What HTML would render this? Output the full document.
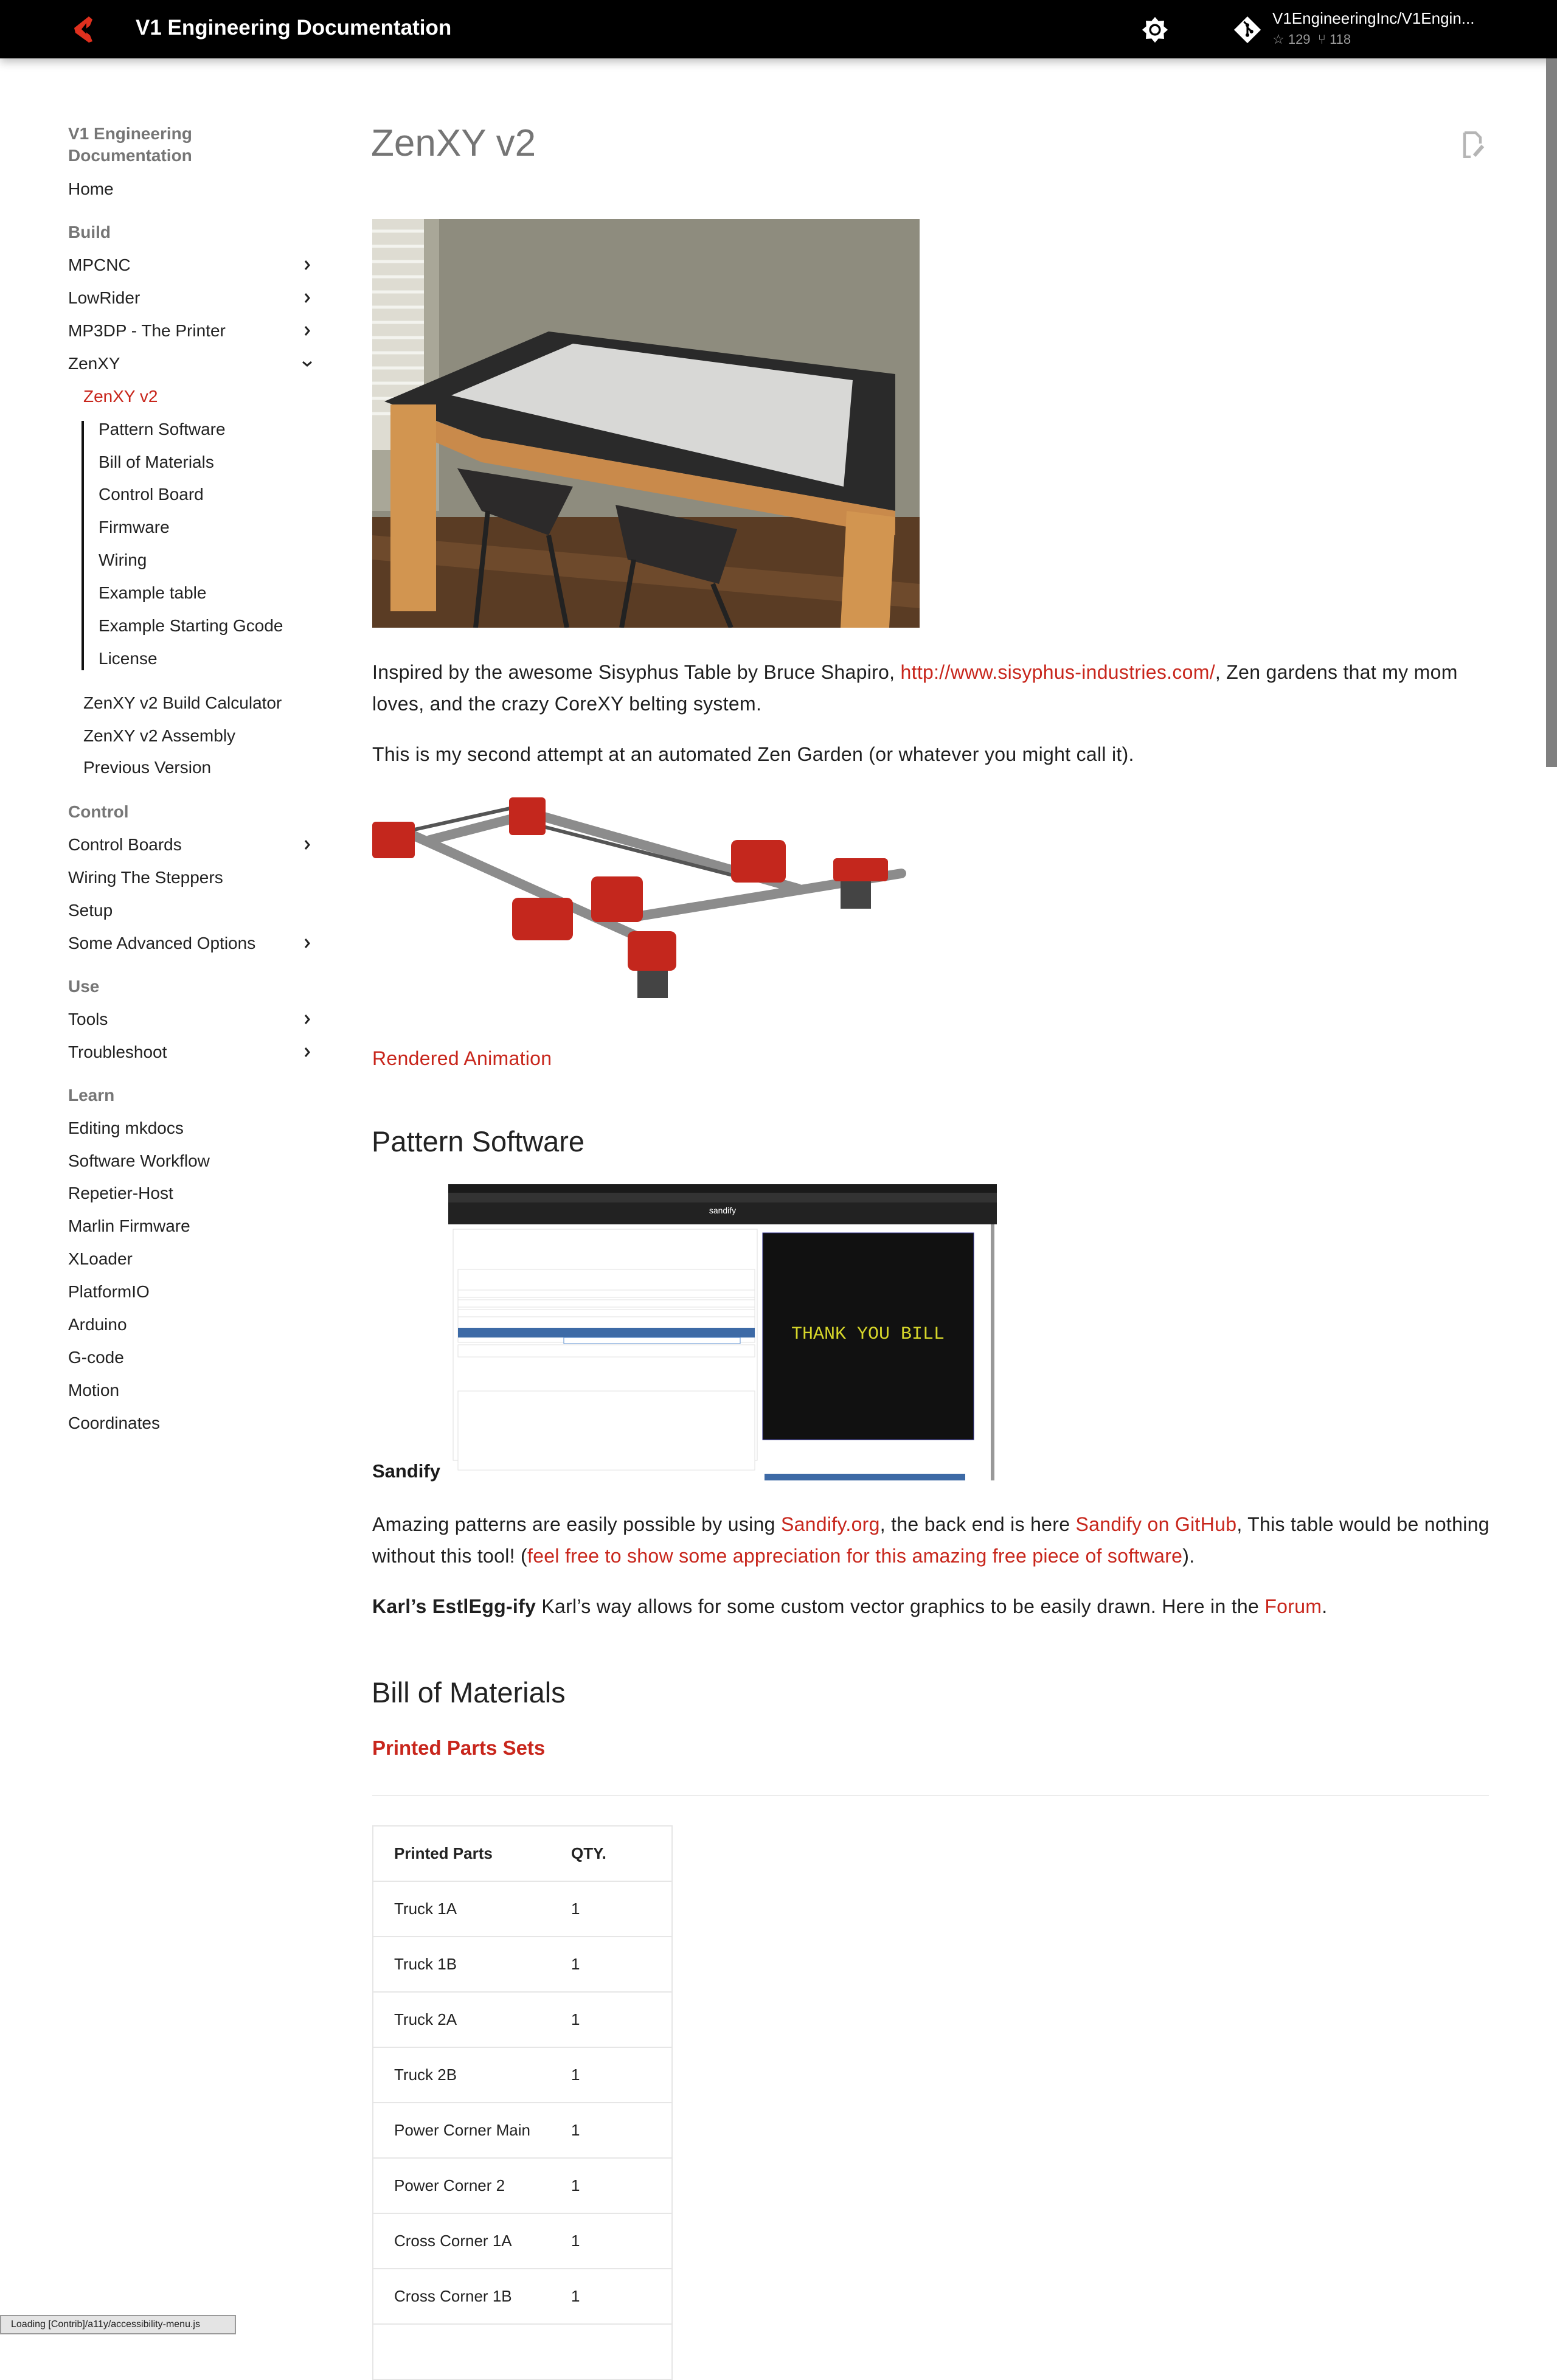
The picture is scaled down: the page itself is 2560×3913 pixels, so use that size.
<!DOCTYPE html>
<html><head><meta charset="utf-8">
<style>
*{margin:0;padding:0;box-sizing:border-box}
html,body{width:2560px;height:3840px;overflow:hidden;background:#fff;font-family:"Liberation Sans",sans-serif;color:#1a1a1a}
.a{position:absolute;white-space:nowrap}
.hdr{position:absolute;left:0;top:0;width:2560px;height:96px;background:#000;box-shadow:0 6px 14px rgba(0,0,0,.25)}
.nav{position:absolute;left:112px;font-size:28px;line-height:54px;height:54px;color:#222}
.nav.h{font-weight:bold;color:#767676}
.nav.s{left:137px}
.nav.ss{left:162px}
.r,.nav.r,p.t.r{color:#c8261c}
p.t{position:absolute;left:612px;font-size:32px;letter-spacing:0.3px;line-height:52px;color:#1f1f1f;white-space:nowrap}
table{position:absolute;left:612px;top:3001px;border-collapse:collapse;font-size:26px;width:494px;border:2px solid #e6e6e6}
td,th{height:91px;border-bottom:2px solid #e6e6e6;text-align:left;padding-left:34px;color:#222}
th{font-weight:bold}
</style></head><body>
<div class="hdr"></div>
<svg class="a" style="left:112px;top:24px" width="50" height="50" viewBox="0 0 50 50"><path d="M34 3 L10 22 L12 30 L34 46 L40 44 L36 34 L26 26 L36 18 L40 8 Z" fill="#e0301e"/><path d="M30 14 L22 24 L30 32 Z" fill="#000"/></svg>
<div class="a" style="left:223px;top:26px;font-size:35px;font-weight:bold;color:#fff">V1 Engineering Documentation</div>
<svg class="a" style="left:1876px;top:26px" width="46" height="46" viewBox="0 0 24 24"><path fill="#fff" d="M12 1 L15 4.5 L19.8 4.2 L19.5 9 L23 12 L19.5 15 L19.8 19.8 L15 19.5 L12 23 L9 19.5 L4.2 19.8 L4.5 15 L1 12 L4.5 9 L4.2 4.2 L9 4.5 Z"/><circle cx="12" cy="12" r="5" fill="#000"/><circle cx="12" cy="12" r="3.2" fill="#fff"/></svg>
<svg class="a" style="left:2028px;top:26px" width="46" height="46" viewBox="0 0 24 24"><path fill="#fff" d="M12 0.5 L23.5 12 L12 23.5 L0.5 12 Z"/><path d="M9 5 L12 8 L12 16 M12 10 L15.5 13.5" stroke="#000" stroke-width="1.6" fill="none"/><circle cx="12" cy="16.5" r="1.6" fill="#000"/><circle cx="15.5" cy="13.5" r="1.6" fill="#000"/><circle cx="12" cy="8" r="1.6" fill="#000"/></svg>
<div class="a" style="left:2092px;top:15px;font-size:26px;color:#fff">V1EngineeringInc/V1Engin...</div>
<div class="a" style="left:2092px;top:52px;font-size:22px;color:#999">☆ 129 &nbsp;⑂ 118</div>
<div class="a" style="left:2542px;top:96px;width:18px;height:1165px;background:#808080"></div>

<!-- sidebar -->
<div class="nav h" style="top:202px;line-height:36px">V1 Engineering<br>Documentation</div>
<div class="nav" style="top:284px">Home</div>
<div class="nav h" style="top:355px">Build</div>
<div class="nav" style="top:409px">MPCNC</div>
<div class="nav" style="top:463px">LowRider</div>
<div class="nav" style="top:517px">MP3DP - The Printer</div>
<div class="nav" style="top:571px">ZenXY</div>
<div class="nav s r" style="top:625px">ZenXY v2</div>
<div class="a" style="left:134px;top:692px;width:4px;height:410px;background:#111"></div>
<div class="nav ss" style="top:679px">Pattern Software</div>
<div class="nav ss" style="top:733px">Bill of Materials</div>
<div class="nav ss" style="top:786px">Control Board</div>
<div class="nav ss" style="top:840px">Firmware</div>
<div class="nav ss" style="top:894px">Wiring</div>
<div class="nav ss" style="top:948px">Example table</div>
<div class="nav ss" style="top:1002px">Example Starting Gcode</div>
<div class="nav ss" style="top:1056px">License</div>
<div class="nav s" style="top:1129px">ZenXY v2 Build Calculator</div>
<div class="nav s" style="top:1183px">ZenXY v2 Assembly</div>
<div class="nav s" style="top:1235px">Previous Version</div>
<div class="nav h" style="top:1308px">Control</div>
<div class="nav" style="top:1362px">Control Boards</div>
<div class="nav" style="top:1416px">Wiring The Steppers</div>
<div class="nav" style="top:1470px">Setup</div>
<div class="nav" style="top:1524px">Some Advanced Options</div>
<div class="nav h" style="top:1595px">Use</div>
<div class="nav" style="top:1649px">Tools</div>
<div class="nav" style="top:1703px">Troubleshoot</div>
<div class="nav h" style="top:1774px">Learn</div>
<div class="nav" style="top:1828px">Editing mkdocs</div>
<div class="nav" style="top:1882px">Software Workflow</div>
<div class="nav" style="top:1935px">Repetier-Host</div>
<div class="nav" style="top:1989px">Marlin Firmware</div>
<div class="nav" style="top:2043px">XLoader</div>
<div class="nav" style="top:2097px">PlatformIO</div>
<div class="nav" style="top:2151px">Arduino</div>
<div class="nav" style="top:2205px">G-code</div>
<div class="nav" style="top:2259px">Motion</div>
<div class="nav" style="top:2313px">Coordinates</div>
<svg class="a" style="left:0;top:0" width="520" height="1760">
<g stroke="#222" stroke-width="3" fill="none">
<path d="M502 429 L508 436 L502 443"/><path d="M502 483 L508 490 L502 497"/><path d="M502 537 L508 544 L502 551"/>
<path d="M498 595 L505 601 L512 595"/>
<path d="M502 1382 L508 1389 L502 1396"/><path d="M502 1544 L508 1551 L502 1558"/>
<path d="M502 1669 L508 1676 L502 1683"/><path d="M502 1723 L508 1730 L502 1737"/>
</g></svg>

<!-- content -->
<div class="a" style="left:610px;top:200px;font-size:62px;color:#757575">ZenXY v2</div>
<svg class="a" style="left:2404px;top:216px" width="40" height="44" viewBox="0 0 20 22"><path d="M2 1 H11 L15 5 V10 M2 1 V21 H7" stroke="#b5b5b5" stroke-width="2.2" fill="none"/><path d="M10 20 L17 12" stroke="#b5b5b5" stroke-width="3"/></svg>

<svg class="a" style="left:612px;top:360px" width="900" height="672" viewBox="0 0 900 672">
<rect width="900" height="672" fill="#8e8c7e"/>
<rect x="0" y="0" width="110" height="480" fill="#a9a798"/>
<rect x="0" y="0" width="85" height="380" fill="#dedcd2"/>
<g stroke="#f3f3ee" stroke-width="5"><path d="M0 20 H85 M0 45 H85 M0 70 H85 M0 95 H85 M0 120 H85 M0 145 H85 M0 170 H85 M0 195 H85 M0 220 H85 M0 245 H85 M0 270 H85 M0 295 H85 M0 320 H85"/></g>
<rect x="0" y="490" width="900" height="182" fill="#5a3c24"/>
<path d="M0 520 L900 600 L900 640 L0 560Z" fill="#6e4a2c"/>
<path d="M20 300 L290 185 L860 255 L860 480 L180 360 Z" fill="#2a2a2a"/>
<path d="M130 290 L330 205 L790 265 L775 440 Z" fill="#d8d8d6"/>
<path d="M30 305 L180 360 L860 480 L860 520 L180 400 L30 335 Z" fill="#c98a4b"/>
<rect x="30" y="305" width="75" height="340" fill="#d29550"/>
<path d="M780 480 L860 490 L850 672 L770 672Z" fill="#d29550"/>
<path d="M140 410 L330 440 L290 520 L180 480Z" fill="#2c2a2a"/>
<path d="M400 470 L600 510 L570 600 L420 560Z" fill="#2c2a2a"/>
<g stroke="#222" stroke-width="8"><path d="M190 480 L170 672 M290 520 L320 672 M430 560 L410 672 M560 600 L590 672"/></g>
</svg>

<p class="t" style="top:1079px">Inspired by the awesome Sisyphus Table by Bruce Shapiro, <span class="r">http://www.sisyphus-industries.com/</span>, Zen gardens that my mom</p>
<p class="t" style="top:1131px">loves, and the crazy CoreXY belting system.</p>
<p class="t" style="top:1214px">This is my second attempt at an automated Zen Garden (or whatever you might call it).</p>

<svg class="a" style="left:612px;top:1296px" width="900" height="372" viewBox="0 0 900 372">
<g stroke-linecap="round">
<path d="M40 65 L450 250 M240 35 L700 165 M95 85 L250 45 M440 210 L870 140" stroke="#8c8c8c" stroke-width="16"/>
<path d="M60 70 L240 30 M250 55 L620 150" stroke="#555" stroke-width="6"/>
</g>
<g fill="#c4271d">
<rect x="0" y="55" width="70" height="60" rx="6"/>
<rect x="225" y="15" width="60" height="62" rx="6"/>
<rect x="590" y="85" width="90" height="70" rx="10"/>
<rect x="758" y="115" width="90" height="38" rx="6"/>
<rect x="230" y="180" width="100" height="70" rx="10"/>
<rect x="360" y="145" width="85" height="75" rx="10"/>
<rect x="420" y="235" width="80" height="65" rx="10"/>
</g>
<rect x="770" y="153" width="50" height="45" fill="#444"/>
<rect x="436" y="300" width="50" height="45" fill="#444"/>
</svg>
<p class="t r" style="top:1714px">Rendered Animation</p>

<div class="a" style="left:611px;top:1849px;font-size:47px;color:#222">Pattern Software</div>

<svg class="a" style="left:737px;top:1947px" width="902" height="487" viewBox="0 0 902 487">
<rect width="902" height="487" fill="#fff"/>
<rect width="902" height="14" fill="#1a1a1a"/>
<rect y="14" width="902" height="16" fill="#333"/>
<rect y="30" width="902" height="36" fill="#222"/>
<text x="451" y="48" font-size="14" fill="#fff" text-anchor="middle" font-family="Liberation Sans">sandify</text>
<rect x="8" y="74" width="500" height="380" fill="#fff" stroke="#ddd"/>
<g fill="#fff" stroke="#e2e2e2"><rect x="16" y="140" width="488" height="120"/><rect x="16" y="174" width="488" height="12"/><rect x="16" y="190" width="488" height="12"/><rect x="16" y="206" width="488" height="12"/><rect x="16" y="264" width="488" height="20"/></g>
<rect x="16" y="236" width="488" height="16" fill="#3d6aa6"/>
<rect x="190" y="252" width="290" height="10" fill="#fff" stroke="#5b8fd0"/>
<rect x="16" y="340" width="488" height="130" fill="#fff" stroke="#e2e2e2"/>
<rect x="517" y="80" width="347" height="340" fill="#111" stroke="#2a2a8a"/>
<text x="690" y="254" font-size="30" fill="#d6d62a" text-anchor="middle" font-family="Liberation Mono">THANK YOU BILL</text>
<rect x="520" y="476" width="330" height="11" fill="#3d6aa6"/>
<rect x="892" y="66" width="6" height="421" fill="#999"/>
</svg>
<div class="a" style="left:612px;top:2401px;font-size:31px;font-weight:bold;color:#1a1a1a">Sandify</div>

<p class="t" style="top:2480px">Amazing patterns are easily possible by using <span class="r">Sandify.org</span>, the back end is here <span class="r">Sandify on GitHub</span>, This table would be nothing</p>
<p class="t" style="top:2532px">without this tool! (<span class="r">feel free to show some appreciation for this amazing free piece of software</span>).</p>
<p class="t" style="top:2615px"><b>Karl’s EstlEgg-ify</b> Karl’s way allows for some custom vector graphics to be easily drawn. Here in the <span class="r">Forum</span>.</p>

<div class="a" style="left:611px;top:2755px;font-size:47px;color:#222">Bill of Materials</div>
<div class="a r" style="left:612px;top:2855px;font-size:33px;font-weight:bold">Printed Parts Sets</div>
<div class="a" style="left:612px;top:2951px;width:1836px;height:2px;background:#ececec"></div>

<table>
<tr><th style="width:326px">Printed Parts</th><th style="padding-left:0">QTY.</th></tr>
<tr><td>Truck 1A</td><td style="padding-left:0">1</td></tr>
<tr><td>Truck 1B</td><td style="padding-left:0">1</td></tr>
<tr><td>Truck 2A</td><td style="padding-left:0">1</td></tr>
<tr><td>Truck 2B</td><td style="padding-left:0">1</td></tr>
<tr><td>Power Corner Main</td><td style="padding-left:0">1</td></tr>
<tr><td>Power Corner 2</td><td style="padding-left:0">1</td></tr>
<tr><td>Cross Corner 1A</td><td style="padding-left:0">1</td></tr>
<tr><td>Cross Corner 1B</td><td style="padding-left:0">1</td></tr>
<tr><td>&nbsp;</td><td></td></tr>
</table>

<div class="a" style="left:0;top:3806px;width:388px;height:32px;background:#e4e4e4;border:2px solid #9a9a9a;font-size:16px;line-height:28px;padding-left:16px;color:#222">Loading [Contrib]/a11y/accessibility-menu.js</div>
</body></html>
